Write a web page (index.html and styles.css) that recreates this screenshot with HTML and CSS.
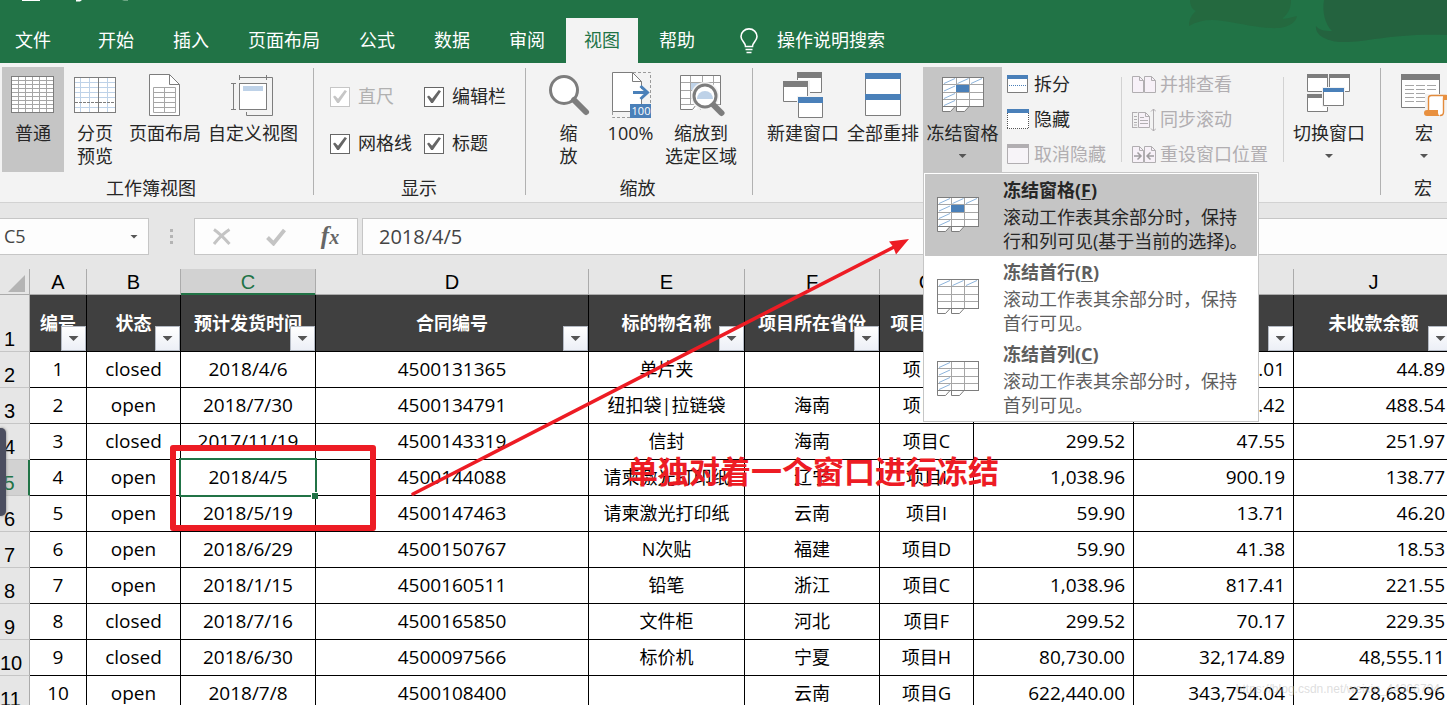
FILE: index.html
```html
<!DOCTYPE html>
<html lang="zh-CN">
<head>
<meta charset="utf-8">
<title>Excel</title>
<link rel="stylesheet" href="styles.css">
</head>
<body>
<svg class="defs" width="0" height="0" aria-hidden="true">
  <symbol id="grid-base" viewBox="0 0 42 37">
    <path d="M.5 29v5.500h8l5-5.500M14.500 29v5.500h8l5-5.500" fill="#fff" stroke="#7d7d7d"/>
    <rect x=".5" y=".5" width="41" height="29" fill="#fff"/>
    <path d="M14.500 1v28M27.500 1v28M1 7.500h40M1 15.500h40M1 22.500h40" stroke="#a6a6a6" fill="none"/>
    <rect x=".5" y=".5" width="41" height="29" fill="none" stroke="#7d7d7d"/>
  </symbol>
  <symbol id="freeze-panes" viewBox="0 0 42 37">
    <use href="#grid-base" width="42" height="37"/>
    <rect x="14" y="8" width="13" height="7" fill="#4a80b9"/>
    <path d="M2 6.500l11-5M15.500 6.500l11-5M29 6.500l11-5M2 14l11-5M2 21.500l11-5M2 28.500l11-5" stroke="#8db4dc" fill="none"/>
  </symbol>
  <symbol id="freeze-row" viewBox="0 0 42 37">
    <use href="#grid-base" width="42" height="37"/>
    <path d="M2 6.500l11-5M15.500 6.500l11-5M29 6.500l11-5" stroke="#8db4dc" fill="none"/>
  </symbol>
  <symbol id="freeze-col" viewBox="0 0 42 37">
    <use href="#grid-base" width="42" height="37"/>
    <path d="M2 6.500l11-5M2 14l11-5M2 21.500l11-5M2 28.500l11-5" stroke="#8db4dc" fill="none"/>
  </symbol>
</svg>

<div class="app">
  <header class="titlebar">
    <svg class="quick" width="140" height="4" aria-hidden="true"><path d="M22 0h18v1H22z M76 0h6l-2 1.500h-4z" fill="#fff"/><path d="M122 0h6v1h-4z" fill="#6ba583"/></svg>
    <svg class="swirl" width="260" height="48" viewBox="0 0 260 48" aria-hidden="true">
      <path d="M3 0c0 6 3 10 6 11-5 4-7 9-7 15 10-6 22-7 34-5 22 3 38 8 56 7 9-1 17-5 18-12-8 2-16 4-14 2 6-5 8-11 8-18z" fill="#24693f"/>
      <path d="M137 0c-2 12 1 24 8 31-8 0-13-1-16-5-1 9 10 15 24 16 26 1 50-9 107-7V0z" fill="#24633f"/>
    </svg>
    <nav class="tabs">
      <button class="tab file">文件</button>
      <button class="tab">开始</button>
      <button class="tab">插入</button>
      <button class="tab">页面布局</button>
      <button class="tab">公式</button>
      <button class="tab">数据</button>
      <button class="tab">审阅</button>
      <button class="tab active">视图</button>
      <button class="tab">帮助</button>
      <button class="tab tell">
        <svg width="18" height="26" viewBox="0 0 18 26" fill="none" stroke="#fff" stroke-width="1.600"><path d="M5.500 18.500c0-4-4.500-5.500-4.500-10a8 7.600 0 0 1 16 0c0 4.500-4.500 6-4.500 10zM5.500 21.500h7M6.500 24.500h5"/></svg>
        操作说明搜索
      </button>
    </nav>
  </header>

  <section class="ribbon">
    <div class="group views">
      <div class="tools">
        <button class="big pressed w62">
          <svg width="48" height="48" viewBox="0 0 48 48"><rect x="2.500" y="5.500" width="42" height="36" fill="#fff"/><path d="M9.500 6v35M16.500 6v35M23.500 6v35M30.500 6v35M37.500 6v35M3 9.500h41M3 13.500h41M3 17.500h41M3 21.500h41M3 25.500h41M3 29.500h41M3 33.500h41M3 37.500h41" stroke="#a6a6a6"/><rect x="2.500" y="5.500" width="42" height="36" fill="none" stroke="#7d7d7d"/></svg>
          <span>普通</span>
        </button>
        <button class="big w62">
          <svg width="48" height="48" viewBox="0 0 48 48"><rect x="3.500" y="6.500" width="41" height="35" fill="#fff"/><path d="M9.500 7v34M18.500 7v34M36.500 7v34M4 11.500h40M4 16.500h40M4 21.500h40M4 26.500h40M4 36.500h40" stroke="#bed2e8"/><path d="M27.500 7v34" stroke="#7d7d7d"/><path d="M4 31.500h40" stroke="#7d7d7d" stroke-dasharray="3 1"/><rect x="3.500" y="6.500" width="41" height="35" fill="none" stroke="#7d7d7d"/></svg>
          <span>分页<br>预览</span>
        </button>
        <button class="big w78">
          <svg width="48" height="48" viewBox="0 0 48 48"><path d="M8.500 3.500h20l10 10v31h-30z" fill="#fff" stroke="#7d7d7d"/><path d="M28.500 3.500v10h10" fill="none" stroke="#7d7d7d"/><path d="M12.500 16.500h22v25h-22zM23.500 16.500v25M12.500 21.500h22M12.500 26.500h22M12.500 31.500h22M12.500 36.500h22" fill="none" stroke="#a6a6a6"/></svg>
          <span>页面布局</span>
        </button>
        <button class="big w98">
          <svg width="48" height="48" viewBox="0 0 48 48"><path d="M38 6.500h5.500v38h-26V41" fill="none" stroke="#7d7d7d"/><rect x="10.500" y="12.500" width="27" height="26" fill="#fff" stroke="#7d7d7d"/><path d="M14 15h20v5H14z" fill="#bed2e8"/><path d="M10.500 4v5M37.500 4v5M11 6.500h27M2 12.500h5M2 38.500h5M4.500 13v25" stroke="#7d7d7d"/></svg>
          <span>自定义视图</span>
        </button>
      </div>
      <div class="caption">工作簿视图</div>
    </div>

    <div class="group show">
      <div class="tools checks">
        <label class="check off"><input type="checkbox" checked disabled>直尺</label>
        <label class="check"><input type="checkbox" checked>编辑栏</label>
        <label class="check"><input type="checkbox" checked>网格线</label>
        <label class="check"><input type="checkbox" checked>标题</label>
      </div>
      <div class="caption">显示</div>
    </div>

    <div class="group zoom">
      <div class="tools">
        <button class="big w57">
          <svg width="48" height="48" viewBox="0 0 48 48"><circle cx="19" cy="19" r="13.500" fill="#fff" stroke="#7d7d7d" stroke-width="3"/><path d="M29 29l12 12" stroke="#7d7d7d" stroke-width="6" stroke-linecap="round"/></svg>
          <span>缩<br>放</span>
        </button>
        <button class="big w67">
          <svg width="48" height="48" viewBox="0 0 48 48"><path d="M5.500 41v5.500h18M26 1.500h17.500V33" fill="none" stroke="#9a9a9a" stroke-dasharray="3 2"/><path d="M5.500 1.500h20l9 9v30h-29z" fill="#fff"/><path d="M34.500 18v-7.500l-9-9h-20v39h18M25.500 1.500v9h9M34.500 26v7" fill="none" stroke="#7d7d7d"/><path d="M26 21.500h14M33.500 15l7 6.500-7 6.500" fill="none" stroke="#4a80b9" stroke-width="3"/><path d="M23 33h21v14H23z" fill="#4a80b9"/><text class="badge" x="34" y="44" text-anchor="middle">100</text></svg>
          <span>100%</span>
        </button>
        <button class="big w74">
          <svg width="48" height="48" viewBox="0 0 48 48"><path d="M3.500 4.500h40v29h-20l-4 5h-16z" fill="#fff"/><path d="M14 12h13v8H14z" fill="#bed2e8"/><path d="M13.500 5v29M25.500 5v8M36.500 5v12M4 11.500h39M4 19.500h12M4 27.500h12M4 33.500h40" fill="none" stroke="#a6a6a6"/><path d="M43.500 34V4.500h-40v34h12l4-5 4 5" fill="none" stroke="#7d7d7d"/><circle cx="28" cy="25" r="14" fill="#f3f3f3"/><circle cx="28" cy="25" r="11" fill="#fff" stroke="#7d7d7d" stroke-width="3"/><path d="M20 28a8 8 0 1 1 16 0z" fill="#bed2e8"/><path d="M36.500 34l8 8" stroke="#7d7d7d" stroke-width="6" stroke-linecap="round"/></svg>
          <span>缩放到<br>选定区域</span>
        </button>
      </div>
      <div class="caption">缩放</div>
    </div>

    <div class="group window">
      <div class="tools">
        <button class="big w80">
          <svg width="48" height="48" viewBox="0 0 48 48"><path d="M18.500 3.500h24v18h-24z" fill="#fff" stroke="#7d7d7d"/><path d="M18 1h25v6H18z" fill="#7d7d7d"/><path d="M3 9h28v24H3z" fill="#f3f3f3"/><path d="M4.500 12.500h24v18h-24z" fill="#fff" stroke="#7d7d7d"/><path d="M4 10h25v6H4z" fill="#7d7d7d"/><path d="M18 25h27v23H18z" fill="#f3f3f3"/><path d="M19.500 28.500h24v18h-24z" fill="#fff" stroke="#7d7d7d"/><path d="M19 26h25v6H19z" fill="#4a80b9"/></svg>
          <span>新建窗口</span>
        </button>
        <button class="big w80">
          <svg width="48" height="48" viewBox="0 0 48 48"><path d="M6.500 3.500h35v41h-35z" fill="#fff" stroke="#7d7d7d"/><path d="M6 2h36v6H6zM6 23h36v6H6z" fill="#4a80b9"/></svg>
          <span>全部重排</span>
        </button>
        <div class="anchor">
          <button class="big pressed w79" aria-expanded="true">
            <svg width="48" height="48" viewBox="0 0 48 48"><use href="#freeze-panes" x="3" y="6" width="42" height="37"/></svg>
            <span>冻结窗格</span>
            <i class="caret"></i>
          </button>
          <div class="menu" role="menu">
            <button class="item hot" role="menuitem">
              <svg width="42" height="37"><use href="#freeze-panes"/></svg>
              <span class="words"><b>冻结窗格(<u>F</u>)</b><span>滚动工作表其余部分时，保持<br>行和列可见(基于当前的选择)。</span></span>
            </button>
            <button class="item" role="menuitem">
              <svg width="42" height="37"><use href="#freeze-row"/></svg>
              <span class="words"><b>冻结首行(<u>R</u>)</b><span>滚动工作表其余部分时，保持<br>首行可见。</span></span>
            </button>
            <button class="item" role="menuitem">
              <svg width="42" height="37"><use href="#freeze-col"/></svg>
              <span class="words"><b>冻结首列(<u>C</u>)</b><span>滚动工作表其余部分时，保持<br>首列可见。</span></span>
            </button>
          </div>
        </div>
        <div class="stack first">
          <button class="small"><svg width="22" height="22" viewBox="0 0 22 22"><path d="M.5 2.500h20v16H.5z" fill="#fff" stroke="#7d7d7d"/><path d="M0 1h21v4H0z" fill="#4a80b9"/><path d="M2 11.500h17" stroke="#4a80b9" stroke-dasharray="1 1"/></svg>拆分</button>
          <button class="small"><svg width="22" height="22" viewBox="0 0 22 22"><path d="M0 2h22v18H0z" fill="#fff"/><path d="M.5 4v16M21.500 4v16M0 19.500h22" fill="none" stroke="#555" stroke-dasharray="1 1"/><path d="M0 0h22v4H0z" fill="#4a80b9"/></svg>隐藏</button>
          <button class="small" disabled><svg width="22" height="22" viewBox="0 0 22 22"><path d="M.5 1.500h21v18H.5z" fill="#f7f4f8" stroke="#b1aeb1"/><path d="M0 0h22v4H0z" fill="#b1aeb1"/></svg>取消隐藏</button>
        </div>
        <div class="stack second">
          <button class="small" disabled><svg width="24" height="22" viewBox="0 0 24 22" fill="#f7f1f8" stroke="#b1aeb1"><path d="M.5 2.500h7l4 4v12H.5zM12.500 2.500h7l4 4v12h-11z"/><path d="M7.500 2.500v4h4M19.500 2.500v4h4" fill="none"/></svg>并排查看</button>
          <button class="small" disabled><svg width="24" height="24" viewBox="0 0 24 24" fill="none" stroke="#b1aeb1"><path d="M.5 4.500h5M.5 4v16M.5 19.500h5M2 8.500h3M2 11.500h3M2 14.500h3M2 17h3"/><path d="M6.500 4.500h7l4 4v11h-11z" fill="#f7f1f8"/><path d="M13.500 4.500v4h4M8 9.500h4M8 12.500h8M8 15.500h8M21.500 1v22M19 3.500l2.500-2.500L24 3.500M19 20.500l2.500 2.500 2.500-2.500"/></svg>同步滚动</button>
          <button class="small" disabled><svg width="24" height="22" viewBox="0 0 24 22" fill="#f7f1f8" stroke="#b1aeb1"><path d="M.5 2.500h7l4 4v12H.5zM12.500 2.500h7l4 4v12h-11z"/><path d="M7.500 2.500v4h4M19.500 2.500v4h4" fill="none"/><path d="M2 12h6M5.500 8.500L9 12l-3.500 3.500M22 12h-6M18.500 8.500L15 12l3.500 3.500" fill="none" stroke="#9f9c9f" stroke-width="1.500"/></svg>重设窗口位置</button>
        </div>
        <button class="big w90">
          <svg width="48" height="48" viewBox="0 0 48 48" stroke="#7d7d7d" fill="#fff"><path d="M2.500 4.500h20v16h-20zM24.500 4.500h20v16h-20zM2.500 24.500h20v16h-20z"/><path d="M2 3h21v4H2zM24 3h21v4H24zM2 23h21v4H2z" fill="#7d7d7d" stroke="none"/><path d="M17 16h23v20H17z" fill="#f3f3f3" stroke="none"/><path d="M18.500 18.500h20v16h-20z"/><path d="M18 17h21v4H18z" fill="#4a80b9" stroke="none"/></svg>
          <span>切换窗口</span>
          <i class="caret"></i>
        </button>
      </div>
      <div class="caption">窗口</div>
    </div>

    <div class="group macro">
      <div class="tools">
        <button class="big w86">
          <svg width="48" height="48" viewBox="0 0 48 48"><path d="M1.500 4.500h38v32h-38z" fill="#fff" stroke="#7d7d7d"/><path d="M1 3h39v6H1z" fill="#7d7d7d"/><path d="M5 14.500h9M16 14.500h9M27 14.500h9M5 18.500h9M16 18.500h9M27 18.500h9M5 22.500h9M16 22.500h9M5 26.500h9M16 26.500h9M5 30.500h9M16 30.500h9" stroke="#a6a6a6"/><path d="M25 23h23v22H25z" fill="#f3f3f3"/><path d="M28.500 40V27q0-2.500 3-2.500h15q-3 0-3 3V41q0 3.500-3.500 3.500" fill="#fff" stroke="#e38b3c" stroke-width="1.400"/><path d="M43 24h5v5h-5zM27 39h11v3q0 2 2 3H27a3 3 0 0 1 0-6z" fill="#e8903f"/></svg>
          <span>宏</span>
          <i class="caret"></i>
        </button>
      </div>
      <div class="caption">宏</div>
    </div>
  </section>

  <section class="formula-row">
    <div class="namebox">
      <input type="text" value="C5" aria-label="名称框">
      <button aria-label="名称列表"><i class="caret"></i></button>
    </div>
    <div class="grip"><i></i><i></i><i></i></div>
    <div class="fx-box">
      <button aria-label="取消"><svg width="20" height="18" viewBox="0 0 20 18" fill="none" stroke="#c4c4c4" stroke-width="3"><path d="M2 1.500C7 5 13 11 17.500 16M17.500 1.500C12 5 6 11 2 16"/></svg></button>
      <button aria-label="输入"><svg width="20" height="18" viewBox="0 0 20 18" fill="none" stroke="#c4c4c4" stroke-width="4"><path d="M1.500 9.500l6 6L18.500 2"/></svg></button>
      <button class="fx" aria-label="插入函数">f<small>x</small></button>
    </div>
    <input class="formula" type="text" value="2018/4/5" aria-label="编辑栏">
  </section>

  <main class="sheet">
    <table>
      <colgroup><col class="c0"><col class="ca"><col class="cb"><col class="cc"><col class="cd"><col class="ce"><col class="cf"><col class="cg"><col class="ch"><col class="ci"><col></colgroup>
      <thead>
        <tr class="letters"><th class="corner"><svg width="17" height="17" viewBox="0 0 17 17"><path d="M17 0v17H0z" fill="#b4b4b4"/></svg></th><th>A</th><th>B</th><th class="sel">C</th><th>D</th><th>E</th><th>F</th><th>G</th><th>H</th><th>I</th><th>J</th></tr>
      </thead>
      <tbody>
        <tr class="titles"><th class="num">1</th>
          <th>编号<button class="filter" aria-label="筛选"><i class="caret"></i></button></th>
          <th>状态<button class="filter" aria-label="筛选"><i class="caret"></i></button></th>
          <th>预计发货时间<button class="filter" aria-label="筛选"><i class="caret"></i></button></th>
          <th>合同编号<button class="filter" aria-label="筛选"><i class="caret"></i></button></th>
          <th>标的物名称<button class="filter" aria-label="筛选"><i class="caret"></i></button></th>
          <th>项目所在省份<button class="filter" aria-label="筛选"><i class="caret"></i></button></th>
          <th>项目名称<button class="filter" aria-label="筛选"><i class="caret"></i></button></th>
          <th>合同金额<button class="filter" aria-label="筛选"><i class="caret"></i></button></th>
          <th>已收款金额<button class="filter" aria-label="筛选"><i class="caret"></i></button></th>
          <th>未收款余额<button class="filter" aria-label="筛选"><i class="caret"></i></button></th>
        </tr>
        <tr><th class="num">2</th><td>1</td><td>closed</td><td>2018/4/6</td><td>4500131365</td><td class="zh">单片夹</td><td class="zh"></td><td class="zh">项目A</td><td class="amt">59.90</td><td class="amt">15.01</td><td class="amt">44.89</td></tr>
        <tr><th class="num">3</th><td>2</td><td>open</td><td>2018/7/30</td><td>4500134791</td><td class="zh">纽扣袋|拉链袋</td><td class="zh">海南</td><td class="zh">项目B</td><td class="amt">538.96</td><td class="amt">50.42</td><td class="amt">488.54</td></tr>
        <tr><th class="num">4</th><td>3</td><td>closed</td><td>2017/11/19</td><td>4500143319</td><td class="zh">信封</td><td class="zh">海南</td><td class="zh">项目C</td><td class="amt">299.52</td><td class="amt">47.55</td><td class="amt">251.97</td></tr>
        <tr><th class="num sel">5</th><td>4</td><td>open</td><td class="cursor">2018/4/5<span class="handle"></span></td><td>4500144088</td><td class="zh">请柬激光打印纸</td><td class="zh">辽宁</td><td class="zh">项目I</td><td class="amt">1,038.96</td><td class="amt">900.19</td><td class="amt">138.77</td></tr>
        <tr><th class="num">6</th><td>5</td><td>open</td><td>2018/5/19</td><td>4500147463</td><td class="zh">请柬激光打印纸</td><td class="zh">云南</td><td class="zh">项目I</td><td class="amt">59.90</td><td class="amt">13.71</td><td class="amt">46.20</td></tr>
        <tr><th class="num">7</th><td>6</td><td>open</td><td>2018/6/29</td><td>4500150767</td><td class="zh">N次贴</td><td class="zh">福建</td><td class="zh">项目D</td><td class="amt">59.90</td><td class="amt">41.38</td><td class="amt">18.53</td></tr>
        <tr><th class="num">8</th><td>7</td><td>open</td><td>2018/1/15</td><td>4500160511</td><td class="zh">铅笔</td><td class="zh">浙江</td><td class="zh">项目C</td><td class="amt">1,038.96</td><td class="amt">817.41</td><td class="amt">221.55</td></tr>
        <tr><th class="num">9</th><td>8</td><td>closed</td><td>2018/7/16</td><td>4500165850</td><td class="zh">文件柜</td><td class="zh">河北</td><td class="zh">项目F</td><td class="amt">299.52</td><td class="amt">70.17</td><td class="amt">229.35</td></tr>
        <tr><th class="num">10</th><td>9</td><td>closed</td><td>2018/6/30</td><td>4500097566</td><td class="zh">标价机</td><td class="zh">宁夏</td><td class="zh">项目H</td><td class="amt">80,730.00</td><td class="amt">32,174.89</td><td class="amt">48,555.11</td></tr>
        <tr><th class="num">11</th><td>10</td><td>open</td><td>2018/7/8</td><td>4500108400</td><td class="zh"></td><td class="zh">云南</td><td class="zh">项目G</td><td class="amt">622,440.00</td><td class="amt">343,754.04</td><td class="amt">278,685.96</td></tr>
      </tbody>
    </table>
  </main>

  <div class="edge-handle"></div>
  <div class="mark-box"></div>
  <svg class="mark-arrow" width="500" height="260" viewBox="0 0 500 260" aria-hidden="true"><path d="M3 257L486 9" stroke="#ed1c24" stroke-width="3.500" stroke-linecap="round"/><path d="M499 2l-20 2.500 4 5 3 8z" fill="#ed1c24"/></svg>
  <div class="mark-text">单独对着一个窗口进行冻结</div>
  <div class="watermark">https://blog.csdn.net/weixin_44306794</div>
</div>
</body>
</html>
```

FILE: styles.css
```css
* { box-sizing: border-box; }

body {
  margin: 0;
  background: #e6e6e6;
  color: #262626;
  font: 18px/23px "Open Sans", "Noto Sans CJK SC", sans-serif;
}

button, input {
  margin: 0;
  padding: 0;
  border: 0;
  background: none;
  color: inherit;
  font: inherit;
}

.defs { position: absolute; }

.app {
  position: relative;
  height: 100vh;
  overflow: hidden;
  display: flex;
  flex-direction: column;
}

/* title bar and tabs */
.titlebar {
  position: relative;
  flex: none;
  padding-top: 18px;
  background: #217346;
  color: #fff;
}
.quick { position: absolute; top: 0; left: 0; }
.swirl { position: absolute; top: 0; right: 0; }
.tabs { position: relative; display: flex; gap: 3px; white-space: nowrap; }
.tab { height: 45px; padding: 0 18px; }
.tab.file { padding: 0 26px 0 15px; }
.tab.active { background: #f3f3f3; color: #217346; }
.tab.tell { display: flex; align-items: center; gap: 19px; padding: 0 24px; }

/* ribbon */
.ribbon {
  flex: none;
  display: flex;
  background: #f3f3f3;
  border-bottom: 1px solid #d2d2d2;
  white-space: nowrap;
}
.group {
  position: relative;
  flex: none;
  display: flex;
  flex-direction: column;
  padding: 4px 0;
}
.group::after {
  content: "";
  position: absolute;
  top: 5px;
  bottom: 7px;
  right: 0;
  width: 1px;
  background: #b1b1b1;
}
.views { width: 314px; padding-left: 2px; }
.show { width: 212px; padding-left: 16px; }
.zoom { width: 227px; padding-left: 14px; }
.window { width: 628px; padding-left: 10px; }
.macro { width: 86px; }
.tools { display: flex; height: 105px; }
.caption { height: 26px; padding: 5px 18px 0 0; text-align: center; }
.views .caption { padding-right: 14px; }
.macro .caption { padding-right: 2px; }

.big {
  height: 105px;
  padding-top: 4px;
  display: flex;
  flex-direction: column;
  align-items: center;
  justify-content: flex-start;
  text-align: center;
}
.big svg { flex: none; margin-bottom: 3px; }
.pressed { background: #c5c5c5; }
.w57 { width: 57px; }
.w62 { width: 62px; }
.w67 { width: 67px; }
.w74 { width: 74px; }
.w78 { width: 78px; }
.w79 { width: 79px; }
.w80 { width: 80px; }
.w86 { width: 86px; }
.w90 { width: 90px; }
.w98 { width: 98px; }

.caret {
  display: block;
  width: 8px;
  height: 4px;
  margin: 0 auto;
  background: #555;
  clip-path: polygon(0 0, 100% 0, 50% 100%);
}
.big .caret { margin: 9px auto 0; }
.badge { fill: #fff; font-size: 11px; }

.checks {
  display: grid;
  grid-template-columns: 94px auto;
  grid-template-rows: 47px 47px;
  padding-top: 6px;
}
.check { display: flex; align-items: center; gap: 8px; }
.check input {
  appearance: none;
  width: 20px;
  height: 20px;
  border: 1px solid #666;
  background: #fff;
  display: grid;
  place-items: center;
}
.check input::before {
  content: "";
  width: 14px;
  height: 13px;
  background: #666;
  clip-path: polygon(0 52%, 14% 42%, 36% 68%, 84% 0, 100% 10%, 42% 100%, 30% 100%);
}
.check.off { color: #b1b1b1; }
.check.off input { border-color: #c6c6c6; }
.check.off input::before { background: #c6c6c6; }

.stack { display: flex; flex-direction: column; position: relative; }
.stack::after {
  content: "";
  position: absolute;
  top: 10px;
  bottom: 10px;
  right: 0;
  width: 1px;
  background: #d2d2d2;
}
.stack.first { width: 120px; padding-left: 5px; }
.stack.second { width: 162px; padding-left: 10px; }
.small { height: 35px; display: flex; align-items: center; gap: 5px; }
.small svg { flex: none; }
.second .small { gap: 4px; }
.small:disabled { color: #b1aeb1; }

/* freeze panes menu */
.anchor { position: relative; }
.menu {
  position: absolute;
  z-index: 5;
  top: 105px;
  left: 0;
  width: 336px;
  padding: 1px;
  border: 1px solid #c6c6c6;
  background: #fff;
}
.item {
  display: flex;
  align-items: center;
  gap: 24px;
  width: 100%;
  height: 82px;
  padding-left: 12px;
  color: #5e5e5e;
  text-align: left;
  line-height: 24px;
}
.item.hot { background: #c5c5c5; color: #262626; }
.item svg { flex: none; }
.words { display: flex; flex-direction: column; gap: 3px; }
.words u { text-decoration-thickness: 1px; text-underline-offset: 2px; }

/* formula bar */
.formula-row {
  flex: none;
  display: flex;
  height: 66px;
  padding: 15px 0 14px;
  color: #444;
}
.namebox, .fx-box, .formula {
  background: #fdfdfd;
  border: 1px solid #c6c6c6;
}
.namebox { display: flex; width: 149px; border-left: 0; }
.namebox input { flex: 1; min-width: 0; padding-left: 4px; }
.namebox button { width: 28px; }
.grip {
  display: flex;
  flex-direction: column;
  justify-content: center;
  align-items: center;
  gap: 3px;
  width: 45px;
}
.grip i { width: 3px; height: 3px; background: #b4b4b4; }
.fx-box { display: flex; width: 164px; margin-right: 4px; }
.fx-box button { flex: 1; display: flex; align-items: center; justify-content: center; }
.fx-box .fx { font: italic bold 25px/34px "Liberation Serif", serif; color: #666; align-items: baseline; }
.fx small { font-size: 20px; }
.formula { flex: 1; min-width: 0; padding-left: 16px; font-size: 20px; border-right: 0; }

/* worksheet */
.sheet { flex: 1; overflow: hidden; }
.sheet table {
  width: calc(100% + 7px);
  table-layout: fixed;
  border-collapse: separate;
  border-spacing: 0;
  color: #000;
}
.c0 { width: 30px; }
.ca { width: 57px; }
.cb, .cg { width: 94px; }
.cc, .cf { width: 135px; }
.cd { width: 273px; }
.ce { width: 156px; }
.ch, .ci { width: 160px; }

.sheet th, .sheet td { padding: 0; text-align: center; white-space: nowrap; }
.sheet td {
  height: 36px;
  background: #fff;
  border-right: 1px solid #000;
  border-bottom: 1px solid #000;
  font-size: 19px;
}
.sheet td.zh { font-size: 18px; }
.sheet td.amt { padding-right: 8px; text-align: right; }
.letters th {
  height: 26px;
  border-right: 1px solid #ababab;
  border-bottom: 1px solid #ababab;
  font: 20px/24px "Liberation Sans", sans-serif;
}
.letters .sel {
  background: #d2d2d2;
  border-bottom-color: #217346;
  box-shadow: inset 0 -1px #217346;
  color: #217346;
}
.letters .corner svg { display: block; margin: 4px 4px 0 auto; }

.sheet .num {
  padding-right: 10px;
  background: #e6e6e6;
  border-right: 1px solid #ababab;
  border-bottom: 1px solid #c6c6c6;
  color: #000;
  font: 20px/23px "Liberation Sans", sans-serif;
  vertical-align: bottom;
}
.sheet .num.sel { background: #d2d2d2; border-right: 2px solid #217346; color: #217346; }

.titles th {
  position: relative;
  height: 57px;
  background: #404040;
  border-right: 1px solid #000;
  border-bottom: 1px solid #000;
  color: #fff;
}
.filter {
  position: absolute;
  right: 0;
  bottom: 0;
  width: 25px;
  height: 25px;
  background: linear-gradient(#fff, #eceff6);
  border: 1px solid #b4bac4;
}
.filter .caret { width: 10px; height: 5px; }
.cursor { position: relative; }
.cursor::after {
  content: "";
  position: absolute;
  inset: -2px;
  border: 2px solid #217346;
}
.handle {
  position: absolute;
  z-index: 1;
  right: -3px;
  bottom: -4px;
  width: 7px;
  height: 7px;
  background: #217346;
  border: solid #fff;
  border-width: 1px 0 0 1px;
}

/* marks drawn over the window */
.edge-handle {
  position: absolute;
  top: 428px;
  left: 0;
  width: 6px;
  height: 88px;
  border-radius: 0 5px 5px 0;
  background: #4b4e60;
  box-shadow: 0 0 3px #777;
}
.mark-box {
  position: absolute;
  top: 445px;
  left: 170px;
  width: 206px;
  height: 86px;
  border: 6px solid #ed1c24;
  border-radius: 3px;
}
.mark-arrow { position: absolute; top: 237px; left: 410px; }
.mark-text {
  position: absolute;
  top: 451px;
  left: 627px;
  color: #ed1c24;
  font-size: 31px;
  font-weight: bold;
  line-height: 40px;
  white-space: nowrap;
}
.watermark {
  position: absolute;
  right: 7px;
  bottom: 7px;
  color: rgba(190, 190, 190, 0.5);
  font: 12px/18px "Liberation Sans", sans-serif;
}
```
